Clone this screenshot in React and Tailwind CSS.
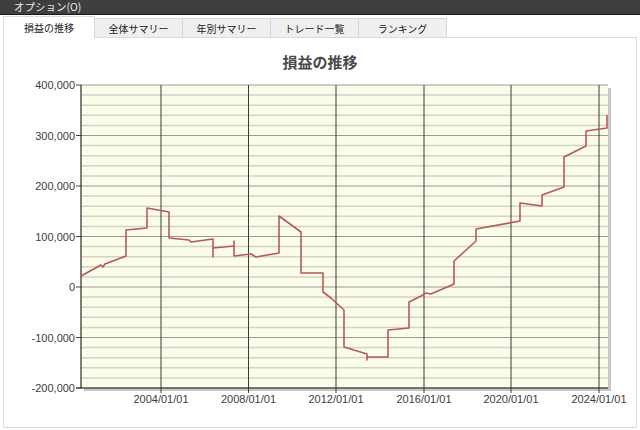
import React from 'react';

const jp = { fontFamily: '"Noto Sans CJK JP", "Liberation Sans", sans-serif' };
const num = { fontFamily: '"Liberation Sans", Arial, sans-serif' };

const tabs = ['損益の推移', '全体サマリー', '年別サマリー', 'トレード一覧', 'ランキング'];

// chart geometry, in page pixels
const X0 = 80;
const X1 = 607;
const Y_TOP = 85;
const Y_BOT = 388;
const PER_100K = (Y_BOT - Y_TOP) / 6;
const yOf = (v) => Y_BOT - ((v + 200000) / 100000) * PER_100K;

const yLabels = [400000, 300000, 200000, 100000, 0, -100000, -200000];
const xTicks = [
  { x: 160, label: '2004/01/01' },
  { x: 247.5, label: '2008/01/01' },
  { x: 335, label: '2012/01/01' },
  { x: 423, label: '2016/01/01' },
  { x: 510, label: '2020/01/01' },
  { x: 598, label: '2024/01/01' },
];

const pts = [
  [80, 276], [100, 265], [102, 267], [104, 264], [125, 256], [125, 230], [146, 228],
  [146, 208], [168, 212], [168, 238], [188, 240], [190, 242], [212, 239], [212, 257],
  [212, 248], [233, 246], [233, 241], [233, 256], [250, 254], [255, 257], [278, 253],
  [278, 216], [300, 232], [300, 273], [322, 273], [322, 292], [330, 298], [343, 310],
  [343, 347], [366, 354], [366, 360], [366, 357], [387, 357], [387, 330], [408, 328],
  [408, 302], [420, 296], [425, 293], [430, 294], [453, 284], [453, 261], [475, 241],
  [475, 229], [519, 221], [519, 203], [541, 206], [541, 195], [563, 187], [563, 157],
  [585, 146], [585, 131], [606, 128], [606, 115],
];

const fmt = (v) => v.toLocaleString('en-US');

const Chart = () => {
  const minor = [];
  for (let v = -180000; v < 400000; v += 20000) {
    if (v % 100000 !== 0) minor.push(v);
  }
  return (
    <svg width="634" height="356" className="block">
      <g transform="translate(-3,-71)">
        {/* shadow + plot background */}
        <rect x={X0 + 3} y={Y_TOP + 3} width={X1 - X0} height={Y_BOT - Y_TOP} fill="#c8c8c8" />
        <rect x={X0} y={Y_TOP} width={X1 - X0} height={Y_BOT - Y_TOP} fill="#fcfceb" />

        {minor.map((v) => (
          <line key={v} x1={X0} x2={X1} y1={yOf(v)} y2={yOf(v)} stroke="#d3d3c6" strokeWidth="1.5" />
        ))}
        {yLabels.map((v) => (
          <g key={v}>
            <line x1={X0} x2={X1} y1={yOf(v)} y2={yOf(v)} stroke="#9a9a9a" strokeWidth="1" />
            <line x1={X0 - 5} x2={X0} y1={yOf(v)} y2={yOf(v)} stroke="#444" strokeWidth="1" />
            <text x={74} y={yOf(v) + 4} textAnchor="end" fontSize="11" fill="#3c3c3c" style={num}>
              {fmt(v)}
            </text>
          </g>
        ))}

        {xTicks.map((t) => (
          <g key={t.label}>
            <line x1={t.x} x2={t.x} y1={Y_TOP} y2={Y_BOT + 5} stroke="#3a3a3a" strokeWidth="1" />
            <text x={t.x} y={Y_BOT + 15} textAnchor="middle" fontSize="11" fill="#3c3c3c" style={num}>
              {t.label}
            </text>
          </g>
        ))}

        <line x1={X0} x2={X0} y1={Y_TOP} y2={Y_BOT} stroke="#2b2b2b" strokeWidth="1.2" />
        <line x1={X0 - 5} x2={X1} y1={Y_BOT} y2={Y_BOT} stroke="#2b2b2b" strokeWidth="1.2" />

        <polyline
          points={pts.map((p) => p.join(',')).join(' ')}
          fill="none"
          stroke="#b35a5a"
          strokeWidth="1.6"
          strokeLinejoin="round"
        />
      </g>
    </svg>
  );
};

export default function App() {
  return (
    <div className="w-[640px] h-[430px] bg-white overflow-hidden flex flex-col" style={jp}>
      {/* menu bar */}
      <div className="h-[14px] bg-[#3e3e3e] border-b border-[#1a1a1a] box-content flex items-center pl-[14px]">
        <span className="text-[10.5px] leading-none text-[#e6e6e6]">オプション(O)</span>
      </div>

      {/* tabs */}
      <div className="flex items-end h-[22px] pl-[3px]">
        {tabs.map((t, i) =>
          i === 0 ? (
            <div
              key={t}
              className="w-[92px] h-[22px] bg-white border-t border-l border-r border-[#dadada] flex items-center justify-center text-[10px] text-[#222] relative z-10 -mb-px"
            >
              {t}
            </div>
          ) : (
            <div
              key={t}
              className="w-[88px] h-[19px] bg-[#efefef] border-t border-r border-[#d6d6d6] flex items-center justify-center text-[10px] text-[#222]"
            >
              {t}
            </div>
          )
        )}
      </div>

      {/* page panel */}
      <div className="ml-[3px] w-[634px] h-[391px] border border-[#dadada] bg-white flex flex-col">
        <div className="h-[33px] flex items-end justify-center pb-[2px]">
          <h2 className="text-[15px] font-bold text-[#4a4a4a] leading-none">損益の推移</h2>
        </div>
        <Chart />
      </div>
    </div>
  );
}
